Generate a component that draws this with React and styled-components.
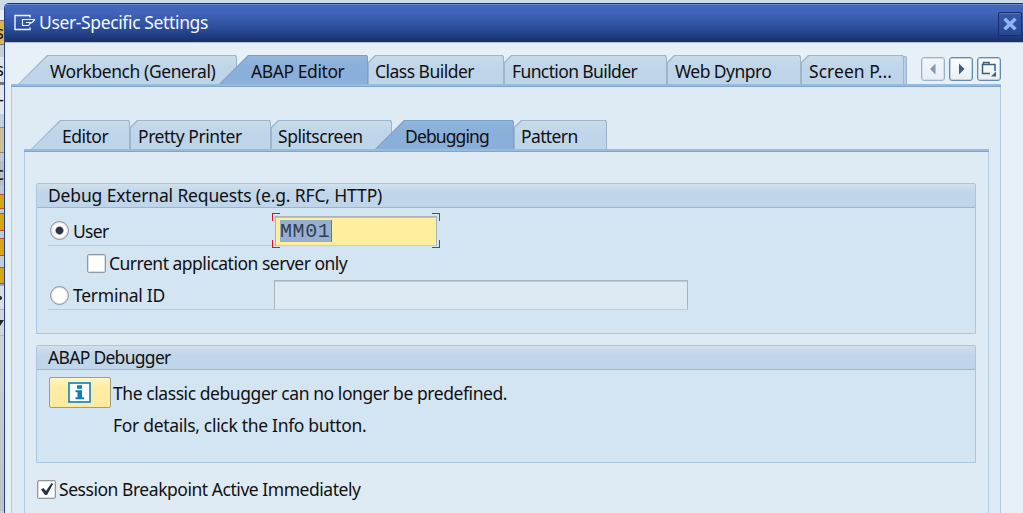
import React from "react";
import styled, { createGlobalStyle, css } from "styled-components";

const Global = createGlobalStyle`
  * { box-sizing: border-box; }
  html, body { margin: 0; padding: 0; overflow: hidden; }
  body { font-family: "Noto Sans", Tahoma, sans-serif; font-size: 17.5px; color: #111; }
  button { font: inherit; color: inherit; border: 0; padding: 0; }
`;

const Desktop = styled.div`
  display: flex;
  width: 1023px;
  height: 513px;
  padding-top: 3px;
  background: #cbdbe7;
  overflow: hidden;
`;

const Behind = styled.div`
  flex: 0 0 4px;
  display: flex;
  flex-direction: column;
  overflow: hidden;
`;

const Sliver = styled.div`
  flex: 0 0 ${(p) => p.$h}px;
  background: ${(p) => p.$bg};
  border-top: ${(p) => (p.$edge ? `1px solid ${p.$edge}` : "0")};
  border-bottom: ${(p) => (p.$edge ? `1px solid ${p.$edge}` : "0")};
  line-height: ${(p) => p.$h - 2}px;
  display: flex;
  align-items: center;
  justify-content: flex-end;
  white-space: nowrap;
`;

const Window = styled.main`
  flex: 1;
  min-width: 0;
  display: flex;
  flex-direction: column;
  background: #e8f0f7;
  border-left: 1px solid #24418d;
  border-radius: 5px 0 0 0;
  overflow: hidden;
`;

const TitleBar = styled.header`
  flex: 0 0 39px;
  display: flex;
  align-items: center;
  padding: 0 1px 2px 9px;
  color: #f4f7fd;
  background: linear-gradient(#4469bd 0%, #3f63b6 25%, #2b4c9b 65%, #193472 94%, #182f6c 100%);
  border-top: 1px solid #1c3778;
  box-shadow: inset 0 1px 0 #6687cb, 0 1px 0 #b5bfda;
`;

const Label = styled.span`
  letter-spacing: ${(p) => p.$track || 0}px;
  white-space: pre;
  line-height: 24px;
`;

const TitleText = styled(Label)`
  flex: 1;
  margin-left: 3px;
`;

const CloseButton = styled.button`
  width: 24px;
  height: 24px;
  margin-top: 4px;
  display: grid;
  place-items: center;
  background: linear-gradient(#3759a8, #29478f);
  border: 1px solid #182f6b;
  border-radius: 2px;
  box-shadow: inset 0 1px 0 #5674b8;
`;

const TabBar = styled.nav`
  display: flex;
  align-items: flex-start;
  height: 29px;
  padding-left: ${(p) => p.$indent}px;
`;

const slanted = "polygon(29px 0, calc(100% - 1px) 0, 100% 2px, 100% 100%, 0 100%)";
const notched = "polygon(7px 0, calc(100% - 1px) 0, 100% 2px, 100% 100%, 0 100%, 0 7px)";

const Tab = styled.button`
  position: relative;
  isolation: isolate;
  flex: 0 0 ${(p) => p.$w}px;
  height: 29px;
  padding: 2px 0 0 ${(p) => p.$pad}px;
  text-align: left;
  background: ${(p) => (p.$active ? "#7a9fca" : "#9cb5ce")};
  clip-path: ${(p) => (p.$slant ? slanted : notched)};
  margin-left: ${(p) => -(p.$overlap || 0)}px;
  &::before {
    content: "";
    position: absolute;
    z-index: -1;
    inset: 1px 1px 0 1px;
    clip-path: ${(p) => (p.$slant ? slanted : notched)};
    background: ${(p) =>
      p.$active
        ? "linear-gradient(#92b8dc, #8aafd9 35%, #8bafd9)"
        : "linear-gradient(#cadcea, #bfd5e9 40%, #bdd4e9)"};
  }
`;

const StackedEdge = styled.div`
  width: 3px;
  height: 28px;
  margin-top: 1px;
  background: #b9d0e4;
  border: solid #9cb5ce;
  border-width: 1px 1px 0 0;
  border-radius: 0 2px 0 0;
`;

const TabTools = styled.div`
  display: flex;
  gap: 4px;
  margin-left: 14px;
  margin-top: 2px;
`;

const ToolButton = styled.button`
  width: 24px;
  height: 24px;
  display: grid;
  place-items: center;
  border: 1.5px solid #6489ab;
  border-radius: 3px;
  background: linear-gradient(#fbfcfd, #e9eff4);
  box-shadow: inset 0 0 0 1px #c3d3e1;
  opacity: ${(p) => (p.$dim ? 0.58 : 1)};
`;

const Panel = styled.section`
  flex: 1;
  display: flex;
  flex-direction: column;
  width: ${(p) => p.$w}px;
  background: #deebf4;
  border: solid #b1cae2;
  border-width: 0 1px;
  &::before {
    content: "";
    flex: 0 0 3px;
    margin: 0 -1px;
    background: linear-gradient(#9bbbdc 0 2px, #7fa5cd 2px);
    border-radius: 1px 1px 0 0;
  }
`;

const OuterTabs = styled.div`
  flex: 1;
  display: flex;
  flex-direction: column;
  padding: 13px 0 0 6px;
`;

const InnerTabs = styled.div`
  flex: 1;
  display: flex;
  flex-direction: column;
  padding: 33px 0 0 12px;
`;

const Form = styled.div`
  display: flex;
  flex-direction: column;
  padding: 31px 12px 0 11px;
`;

const Group = styled.fieldset`
  height: ${(p) => p.$h}px;
  margin: 0 0 11px;
  padding: 0;
  min-width: 0;
  border: 1px solid #abc5df;
  border-radius: 2px 2px 0 0;
  background: #d3e5f3;
`;

const GroupTitle = styled.div`
  height: 24px;
  padding: 0 0 2px 11px;
  background: linear-gradient(#d0e0ed, #c1d6e9 38%, #bfd5e9);
  border-bottom: 1px solid #9cb7d4;
  display: flex;
  align-items: center;
`;

const UserRow = styled.div`
  display: flex;
  height: 38px;
  padding-left: 11px;
`;

const FieldLabel = styled.label`
  width: 227px;
  height: ${(p) => p.$h}px;
  display: flex;
  align-items: center;
  padding: ${(p) => p.$top}px 0 0 2px;
  border-bottom: 1px solid #bdcbd6;
`;

const OptionRow = styled.label`
  height: 34px;
  display: flex;
  align-items: center;
  padding: 0 0 0 50px;
`;

const TerminalRow = styled.div`
  display: flex;
  padding: 0 0 0 11px;
`;

const Radio = styled.span`
  width: 19px;
  height: 19px;
  margin-right: 4px;
  border-radius: 50%;
  border: 1.5px solid #8f969d;
  background: ${(p) =>
    p.$on
      ? "radial-gradient(circle, #2f3046 0 3.2px, #fff 4.6px, #fbfbfb 60%, #ddd)"
      : "radial-gradient(circle, #fff 0 60%, #e4e4e4)"};
  box-shadow: inset 0 0 0 1px #dcdde0;
`;

const Check = styled.span`
  width: 19px;
  height: 19px;
  margin-right: 3px;
  display: grid;
  place-items: center;
  border: 1.5px solid #92989e;
  border-radius: 2px;
  background: #fff;
  box-shadow: inset 0 0 0 1px #dcdde0;
`;

const Focus = styled.div`
  position: relative;
  width: 168px;
  height: 35px;
  margin: 5px 0 0 -3px;
  padding: 3px 3px 2px 3px;
`;

const Corner = styled.i`
  position: absolute;
  width: 8px;
  height: 8px;
  ${(p) => p.$v}: 0;
  ${(p) => p.$s}: 0;
  border: 0 solid #e0161c;
  border-${(p) => p.$v}-width: 1px;
  border-${(p) => p.$s}-width: 1px;
  filter: drop-shadow(0 0 0.4px #e0161c);
`;

const fieldEdges = css`
  border: 1px solid #a9b3bb;
  border-bottom-color: #c4cdd2;
  border-radius: 1px;
`;

const UserField = styled.div`
  ${fieldEdges}
  height: 30px;
  padding: 3px 4px;
  background: #ffee9e;
  box-shadow: inset 0 1px 0 #c4c0a4;
`;

const Selection = styled.span`
  display: block;
  width: 52px;
  height: 22px;
  line-height: 23px;
  background: #97b0d2;
  border-right: 1px solid #66758c;
  color: #333f50;
  font-family: "Liberation Mono", monospace;
  font-size: 20px;
  letter-spacing: 0.6px;
`;

const TerminalField = styled.div`
  ${fieldEdges}
  width: 414px;
  height: 30px;
  margin: 0 0 0 -1px;
  background: #dce9f3;
  box-shadow: inset 0 1px 0 #c0c9d1;
`;

const InfoBody = styled.div`
  display: flex;
  padding: 7px 0 0 12px;
`;

const InfoButton = styled.button`
  width: 62px;
  height: 31px;
  display: grid;
  place-items: center;
  margin-right: 2px;
  padding: 0 2px 1px 0;
  background: linear-gradient(#fff6c8, #ffeda4 30%, #fdeaa0);
  border: 1px solid #a39b83;
  border-radius: 2px;
`;

const InfoText = styled.div`
  display: flex;
  flex-direction: column;
  gap: 8px;
  padding-top: 4px;
`;

const SessionRow = styled.label`
  display: flex;
  align-items: center;
  height: 30px;
  padding-left: 1px;
`;

const outerTabs = [
  { text: "Workbench (General)", w: 219, pad: 32, slant: true, track: -0.42 },
  { text: "ABAP Editor", w: 149, pad: 32, slant: true, active: true, overlap: 18, track: -0.42 },
  { text: "Class Builder", w: 136, pad: 7, track: -0.52 },
  { text: "Function Builder", w: 163, pad: 8, track: -0.62 },
  { text: "Web Dynpro", w: 134, pad: 8, track: -0.56 },
  { text: "Screen P...", w: 103, pad: 8, track: 0.05 },
];

const innerTabs = [
  { text: "Editor", w: 99, pad: 31, slant: true, track: -0.5 },
  { text: "Pretty Printer", w: 141, pad: 8, track: -0.45 },
  { text: "Splitscreen", w: 121, pad: 7, track: -0.48 },
  { text: "Debugging", w: 139, pad: 30, slant: true, active: true, overlap: 17, track: -0.88 },
  { text: "Pattern", w: 93, pad: 7, track: -0.62 },
];

const slivers = [
  [7, "#cbdbe7"], [10, "#e7edf1"], [25, "#d9b648", "#777", "s"], [12, "#c3ced9"],
  [25, "#dfe4e8", null, "s"], [3, "#777"], [29, "#e4e6e9", null, "-"],
  [13, "#c3d0dc"], [26, "#cdbf96", "#938a70"], [8, "#bcc8d4"],
  [25, "#b8bdc3", null, "c"], [8, "#b9c6d8"], [15, "#d9a514", "#b94c2b"], [4, "#c2c7cf"],
  [18, "#d9a514", "#b94c2b"], [7, "#bfc8d6"], [18, "#d9a514", "#b94c2b"], [11, "#c4ccd8"],
  [17, "#d9a514", "#b94c2b"], [2, "#8ea9c8"], [23, "#d7dde5", null, <Dot />],
  [27, "#cdd6df", "#a4b7cb", <Wedge />], [175, "linear-gradient(#cfd2d6, #bcc1c7)"], [20, "#c3d0df"],
];

function Dot() {
  return <svg width="4" height="6" viewBox="0 0 4 6"><circle cx="0" cy="3" r="2" fill="#222" /></svg>;
}

function Wedge() {
  return <svg width="4" height="6" viewBox="0 0 4 6"><path d="M0 0h4L0 6z" fill="#222" /></svg>;
}

function TabRow({ tabs }) {
  return tabs.map((t) => (
    <Tab key={t.text} $w={t.w} $pad={t.pad} $slant={t.slant} $active={t.active} $overlap={t.overlap}>
      <Label $track={t.track}>{t.text}</Label>
    </Tab>
  ));
}

function SessionIcon() {
  return (
    <svg width="22" height="17" viewBox="0 0 22 17" fill="none" stroke="#f1f5fc" strokeWidth="1.4">
      <path d="M16 3.500V1.500H1v14h15v-2" />
      <path d="M21 5.500H8.500v6h6l1.500-2 2-1L21 5.500M12 8.500h5" strokeWidth="1.1" />
    </svg>
  );
}

function CloseIcon() {
  return (
    <svg width="14" height="14" viewBox="0 0 14 14" fill="none" stroke="#8fb2fb" strokeWidth="3.6">
      <path d="M1.6 1.8L12.4 12.2M12.4 1.8L1.6 12.2" />
    </svg>
  );
}

function Arrow({ left }) {
  return (
    <svg width="12" height="12" viewBox="0 0 12 12" fill="#3d5f80">
      <path d={left ? "M8.5 .5v11L3 6z" : "M4 .5v11L9.500 6z"} />
    </svg>
  );
}

function ListIcon() {
  return (
    <svg width="16" height="16" viewBox="0 0 16 16" fill="none" stroke="#3d6080" strokeWidth="1.5">
      <path d="M9 12.500H1.500V3.500h12.500V10" />
      <path d="M2.500 3V1.500h5.500V3" />
      <path d="M15 10.500v5h-5z" fill="#3d6080" stroke="none" />
    </svg>
  );
}

function InfoIcon() {
  return (
    <svg width="23" height="21" viewBox="0 0 23 21">
      <rect x="1" y="1" width="21" height="19" fill="#fff" stroke="#1786c2" strokeWidth="1.7" />
      <path d="M9 3.300h5v3.500H9zM7.500 8.300H14v7h2v2H7.500v-2h2v-5h-2z" fill="#087fc0" />
    </svg>
  );
}

function CheckIcon() {
  return (
    <svg width="14" height="14" viewBox="0 0 14 14" fill="#2d2f49">
      <path d="M1 7.500L3.500 6 6 9 11.500 1 13 2 7 13H5z" />
    </svg>
  );
}

export default function App() {
  return (
    <>
      <Global />
      <Desktop>
        <Behind>
          {slivers.map(([h, bg, edge, text], i) => (
            <Sliver key={i} $h={h} $bg={bg} $edge={edge}>{text}</Sliver>
          ))}
        </Behind>
        <Window>
          <TitleBar>
            <SessionIcon />
            <TitleText $track={-0.37}>User-Specific Settings</TitleText>
            <CloseButton aria-label="Close"><CloseIcon /></CloseButton>
          </TitleBar>
          <OuterTabs>
            <TabBar $indent={7}>
              <TabRow tabs={outerTabs} />
              <StackedEdge />
              <TabTools>
                <ToolButton $dim aria-label="Previous"><Arrow left /></ToolButton>
                <ToolButton aria-label="Next"><Arrow /></ToolButton>
                <ToolButton aria-label="Tab list"><ListIcon /></ToolButton>
              </TabTools>
            </TabBar>
            <Panel $w={990}>
              <InnerTabs>
                <TabBar $indent={7}>
                  <TabRow tabs={innerTabs} />
                </TabBar>
                <Panel $w={965}>
                  <Form>
                    <Group $h={151}>
                      <GroupTitle><Label $track={-0.15}>Debug External Requests (e.g. RFC, HTTP)</Label></GroupTitle>
                      <UserRow>
                        <FieldLabel $h={38} $top={8}><Radio $on /><Label $track={-0.7}>User</Label></FieldLabel>
                        <Focus>
                          <UserField><Selection>MM01</Selection></UserField>
                          <Corner $v="top" $s="left" />
                          <Corner $v="top" $s="right" />
                          <Corner $v="bottom" $s="left" />
                          <Corner $v="bottom" $s="right" />
                        </Focus>
                      </UserRow>
                      <OptionRow><Check /><Label $track={-0.5}>Current application server only</Label></OptionRow>
                      <TerminalRow>
                        <FieldLabel $h={30} $top={1}><Radio /><Label $track={-0.27}>Terminal ID</Label></FieldLabel>
                        <TerminalField />
                      </TerminalRow>
                    </Group>
                    <Group $h={118}>
                      <GroupTitle><Label $track={-0.7}>ABAP Debugger</Label></GroupTitle>
                      <InfoBody>
                        <InfoButton aria-label="Info"><InfoIcon /></InfoButton>
                        <InfoText>
                          <Label $track={-0.43}>The classic debugger can no longer be predefined.</Label>
                          <Label $track={-0.31}>For details, click the Info button.</Label>
                        </InfoText>
                      </InfoBody>
                    </Group>
                    <SessionRow>
                      <Check><CheckIcon /></Check>
                      <Label $track={-0.46}>Session Breakpoint Active Immediately</Label>
                    </SessionRow>
                  </Form>
                </Panel>
              </InnerTabs>
            </Panel>
          </OuterTabs>
        </Window>
      </Desktop>
    </>
  );
}
